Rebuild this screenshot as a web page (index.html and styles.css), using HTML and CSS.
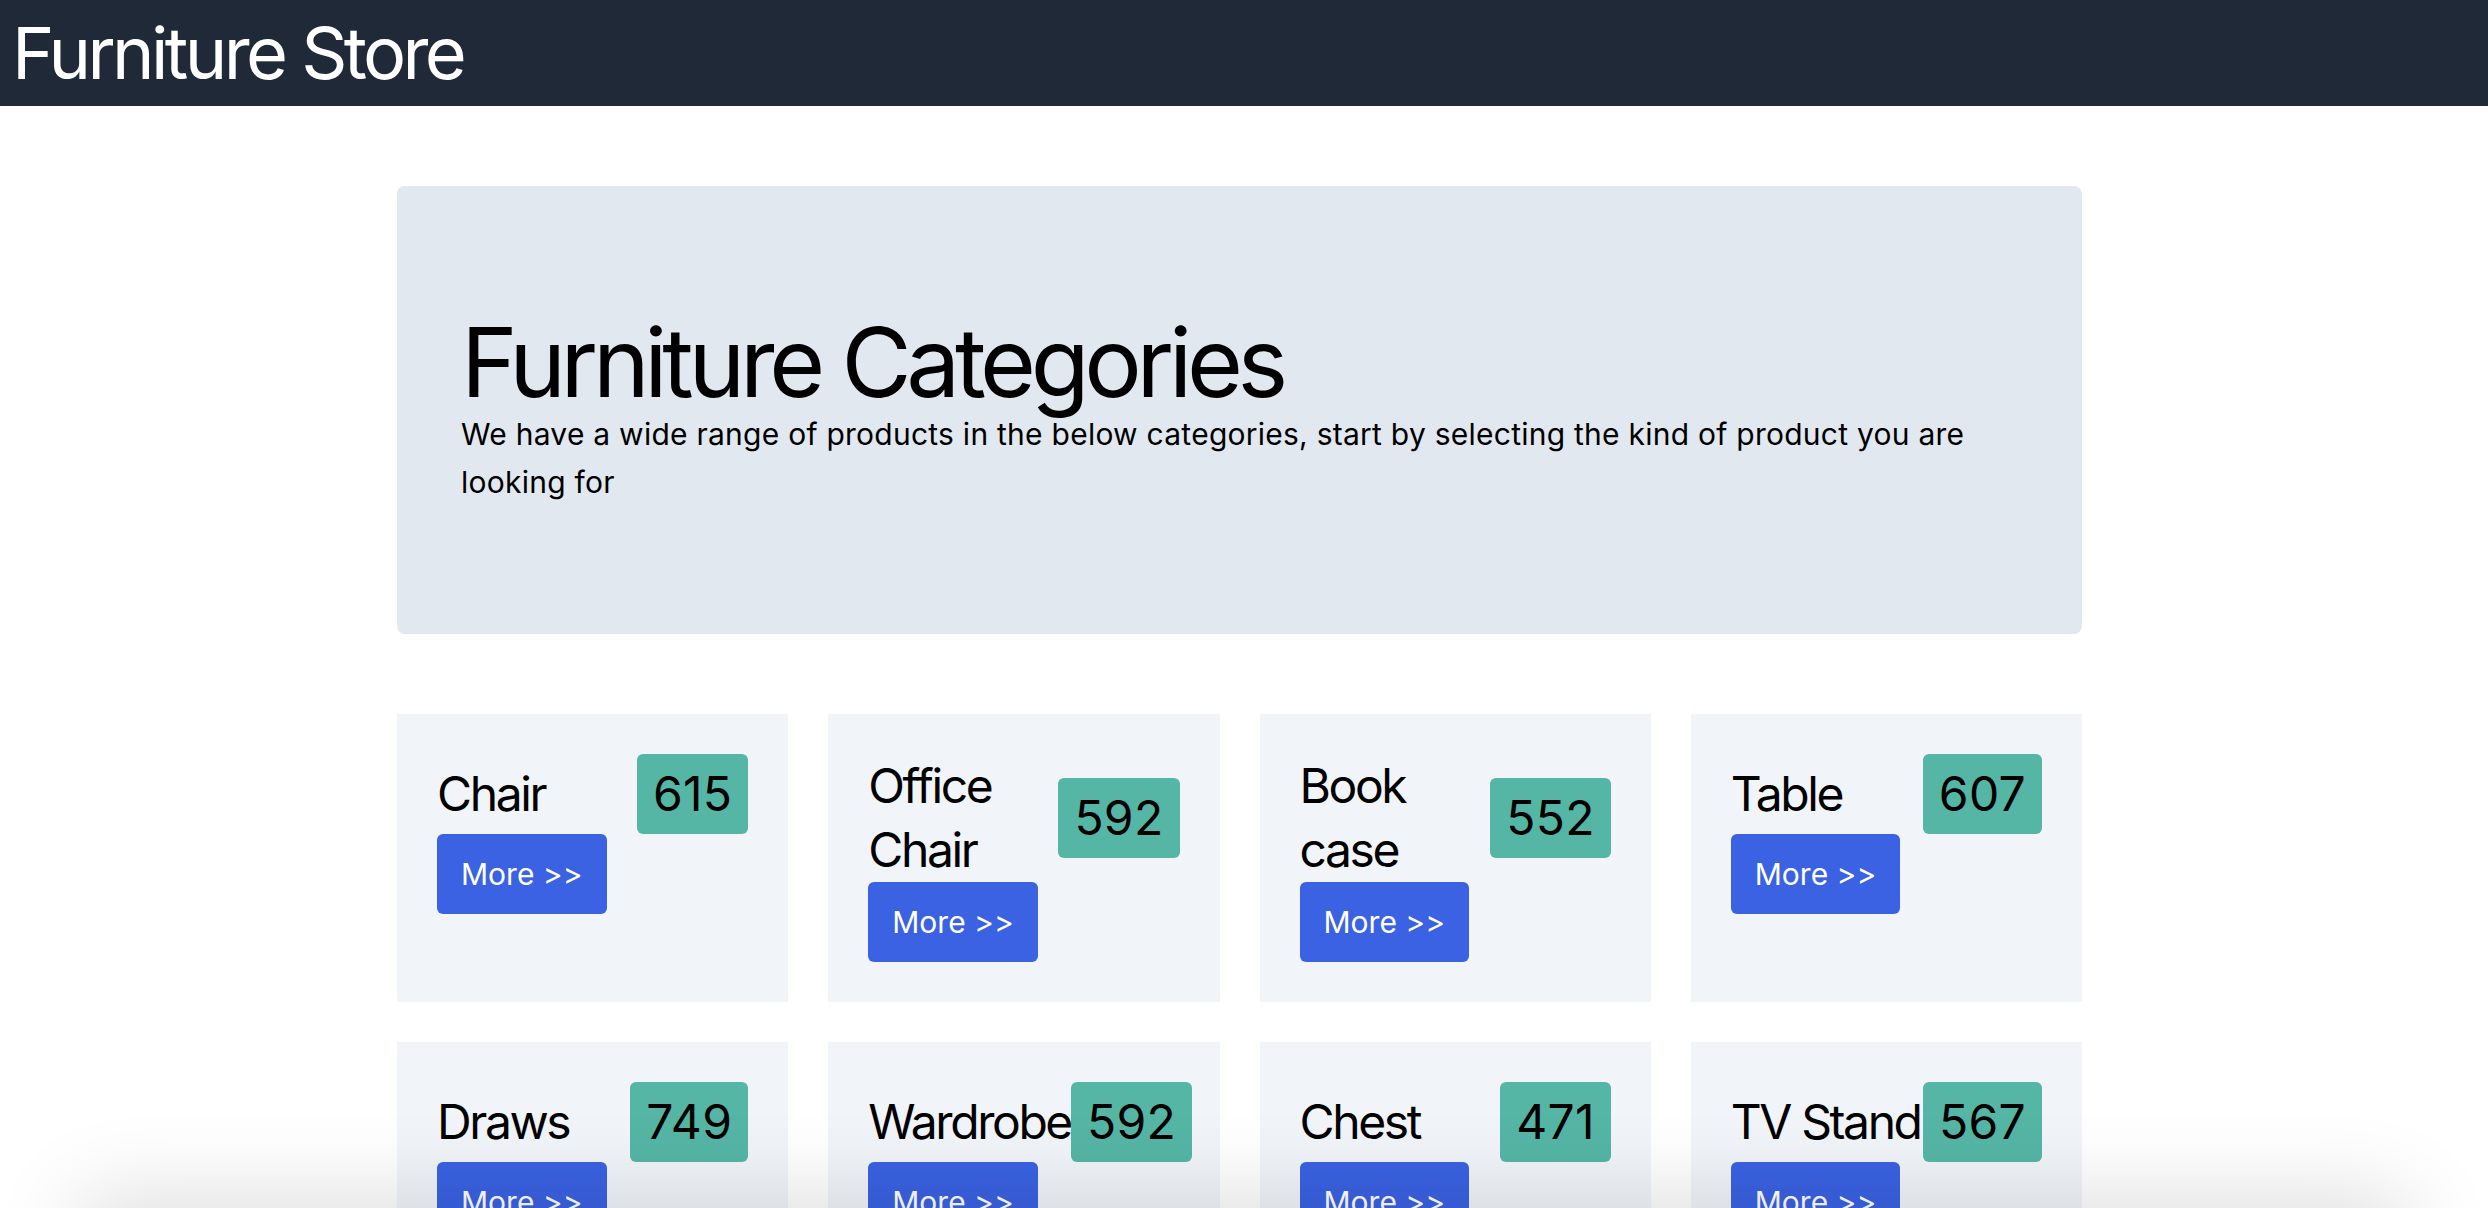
FILE: index.html
```html
<!DOCTYPE html>
<html lang="en">
<head>
<meta charset="utf-8">
<title>Furniture Store</title>
<link rel="stylesheet" href="styles.css">
</head>
<body>
<header class="topbar">
  <h1 class="brand">Furniture Store</h1>
</header>
<div class="page">
  <main class="container">
    <section class="hero">
      <h2 class="hero-title">Furniture Categories</h2>
      <p class="hero-text">We have a wide range of products in the below categories, start by selecting the kind of product you are looking for</p>
    </section>
    <section class="grid">
      <article class="card">
        <div class="card-head"><h3 class="card-title">Chair</h3><span class="badge">615</span></div>
        <a class="btn" href="#">More &gt;&gt;</a>
      </article>
      <article class="card">
        <div class="card-head"><h3 class="card-title">Office Chair</h3><span class="badge">592</span></div>
        <a class="btn" href="#">More &gt;&gt;</a>
      </article>
      <article class="card">
        <div class="card-head"><h3 class="card-title">Book case</h3><span class="badge">552</span></div>
        <a class="btn" href="#">More &gt;&gt;</a>
      </article>
      <article class="card">
        <div class="card-head"><h3 class="card-title">Table</h3><span class="badge">607</span></div>
        <a class="btn" href="#">More &gt;&gt;</a>
      </article>
      <article class="card">
        <div class="card-head"><h3 class="card-title">Draws</h3><span class="badge">749</span></div>
        <a class="btn" href="#">More &gt;&gt;</a>
      </article>
      <article class="card">
        <div class="card-head"><h3 class="card-title">Wardrobe</h3><span class="badge">592</span></div>
        <a class="btn" href="#">More &gt;&gt;</a>
      </article>
      <article class="card">
        <div class="card-head"><h3 class="card-title">Chest</h3><span class="badge">471</span></div>
        <a class="btn" href="#">More &gt;&gt;</a>
      </article>
      <article class="card">
        <div class="card-head"><h3 class="card-title">TV Stand</h3><span class="badge">567</span></div>
        <a class="btn" href="#">More &gt;&gt;</a>
      </article>
    </section>
  </main>
</div>
<div class="bottom-shade"></div>
</body>
</html>
```

FILE: styles.css
```css
html, body {
  margin: 0;
  padding: 0;
  background: #ffffff;
}

body {
  font-family: Inter, "Liberation Sans", Arial, sans-serif;
  color: #000000;
  overflow: hidden;
}

.topbar {
  background: #1f2937;
  padding: 17px 12px;
}

.brand {
  margin: 0;
  font-size: 72px;
  line-height: 72px;
  font-weight: 400;
  color: #ffffff;
  letter-spacing: -3.6px;
}

.page {
  padding-right: 9px;
}

.container {
  width: 1685px;
  margin: 80px auto 0;
}

.hero {
  background: #e2e8f0;
  border-radius: 8px;
  padding: 128px 64px;
}

.hero-title {
  margin: 0;
  font-size: 96px;
  line-height: 96px;
  font-weight: 400;
  letter-spacing: -5.3px;
}

.hero-text {
  margin: 0;
  font-size: 30px;
  line-height: 48px;
  letter-spacing: 0.25px;
}

.grid {
  margin-top: 80px;
  display: grid;
  grid-template-columns: repeat(4, minmax(0, 1fr));
  gap: 40px;
}

.card {
  background: #f1f5f9;
  padding: 40px;
  min-width: 0;
}

.card-head {
  display: flex;
  justify-content: space-between;
  align-items: center;
}

.card-title {
  margin: 0;
  font-size: 48px;
  line-height: 64px;
  font-weight: 400;
  letter-spacing: -2.4px;
}

.badge {
  background: #55b6a6;
  border-radius: 6px;
  padding: 16px;
  font-size: 48px;
  line-height: 48px;
  letter-spacing: 0.3px;
}

.btn {
  display: inline-block;
  background: #3a62e3;
  color: #ffffff;
  text-decoration: none;
  border-radius: 6px;
  padding: 16px 24px;
  font-size: 30px;
  line-height: 48px;
}

.bottom-shade {
  position: fixed;
  left: 90px;
  right: 90px;
  top: 100%;
  height: 80px;
  box-shadow: 0 0 90px 10px rgba(0, 0, 0, 0.14);
  pointer-events: none;
}
```
